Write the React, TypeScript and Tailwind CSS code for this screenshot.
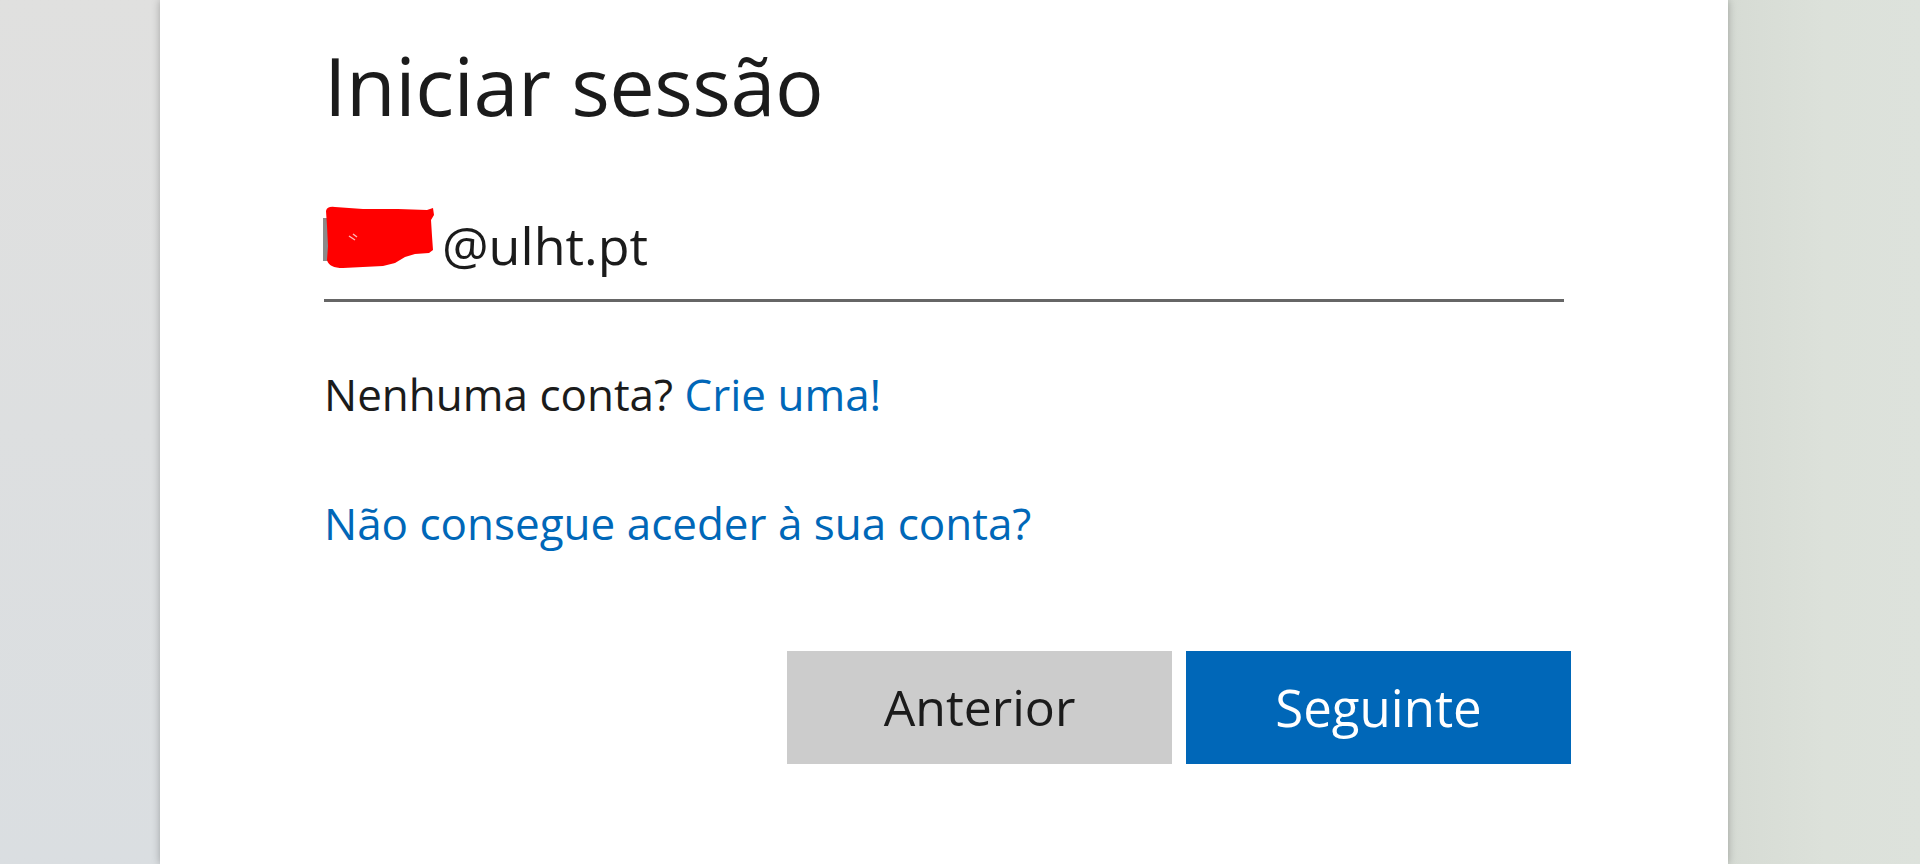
import React from 'react';

const font = { fontFamily: '"Open Sans", "Noto Sans", sans-serif' };

// scribble used to hide the user name in the e-mail address
const Redaction: React.FC = () => (
  <svg width="112" height="64" viewBox="0 0 112 64" className="shrink-0">
    <rect x="0" y="12" width="6" height="43" fill="#8a8a8a" />
    <path
      d="M3 5 Q4 0 12 1 L40 3 L75 3 L104 4 L110 2 L111 9 L108 14 L109 30 L110 44 L106 47 L92 48 L82 51 L72 57 L60 60 L40 61 L20 62 Q6 62 4 54 L5 40 L4 20 Z"
      fill="#ff0000"
    />
    <path d="M26 30 L32 34 M30 28 L34 31" stroke="#ffb3b3" strokeWidth="1.5" />
  </svg>
);

export default function App() {
  return (
    <div className="flex h-[864px] w-full overflow-hidden" style={font}>
      {/* blurred background, left */}
      <div className="w-[160px] shrink-0 bg-gradient-to-b from-[#e0e0df] via-[#dddfe0] to-[#dadee1]" />

      {/* sign-in card */}
      <div className="w-[1568px] shrink-0 bg-white shadow-[0_0_8px_rgba(0,0,0,0.28)] pl-[164px] pr-[157px] pt-[44px] relative z-10">
        <h1 className="text-[81px] leading-[81px] font-medium text-[#1b1b1b] tracking-[-0.5px]">
          Iniciar sessão
        </h1>

        <div className="mt-[94px] border-b-[3px] border-[#666666] w-[1240px] pb-[28px] flex items-end">
          <div className="flex items-center h-[52px]">
            <div className="-ml-[1px] mr-[7px] -mt-[14px]">
              <Redaction />
            </div>
            <span className="text-[52px] leading-[52px] text-[#1b1b1b]">@ulht.pt</span>
          </div>
        </div>

        <p className="mt-[70px] text-[44px] leading-[45px] text-[#1b1b1b]">
          Nenhuma conta? <a className="text-[#0067b8]">Crie uma!</a>
        </p>

        <p className="mt-[84px] text-[44px] leading-[45px] text-[#0067b8]">
          Não consegue aceder à sua conta?
        </p>

        <div className="mt-[105px] flex justify-end gap-[14px]">
          <button className="w-[385px] h-[113px] bg-[#cccccc] text-[#1b1b1b] text-[50px] leading-[53px]">
            Anterior
          </button>
          <button className="w-[385px] h-[113px] bg-[#0067b8] text-white text-[51px] leading-[53px]">
            Seguinte
          </button>
        </div>
      </div>

      {/* blurred background, right */}
      <div className="flex-1 bg-gradient-to-r from-[#d6dbd4] to-[#dde2dc] via-[#dce1da]" />
    </div>
  );
}
